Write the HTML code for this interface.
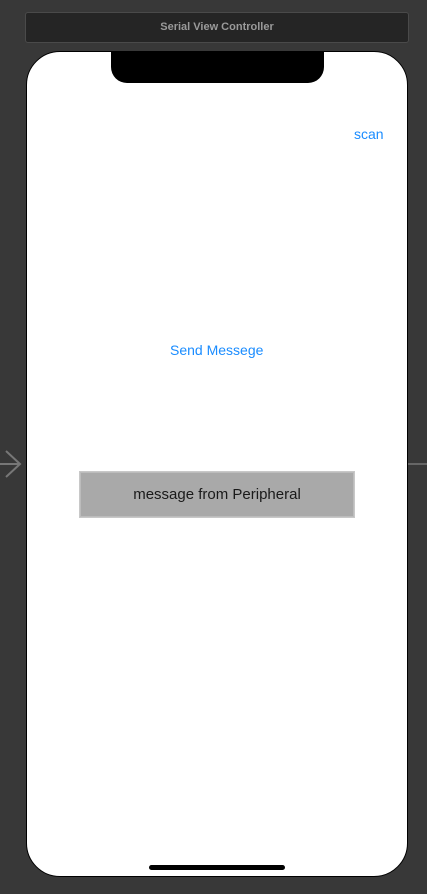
<!DOCTYPE html><html><head><style>
body{margin:0;width:427px;height:894px;background:#383838;position:relative;overflow:hidden;font-family:"Liberation Sans",sans-serif}
.hdr{position:absolute;left:25px;top:12px;width:382px;height:29px;background:#252525;border:1px solid #4a4a4a;border-radius:3px;color:#9a9a9a;font-size:11px;font-weight:bold;text-align:center;line-height:29px}
.ph{position:absolute;left:26px;top:51px;width:380px;height:824px;background:#fff;border:1px solid #000;border-radius:34px;overflow:hidden}
.notch{position:absolute;left:84px;top:-2px;width:213px;height:33px;background:#000;border-radius:0 0 16px 16px}
.home{position:absolute;left:122px;top:813px;width:136px;height:5px;background:#000;border-radius:3px}
.b{position:absolute;color:#1a8cff;font-size:14px}
.box{position:absolute;left:52px;top:419px;width:274px;height:45px;background:#a9a9a9;border:1px solid #c8c8c8;box-shadow:inset 0 0 0 1px #bcbcbc;text-align:center;line-height:46px;font-size:15px;color:#1a1a1a}
</style></head><body>
<div class="hdr">Serial View Controller</div>
<svg style="position:absolute;left:0;top:448px" width="26" height="32"><path d="M6 3 L20 16 L6 29 M0 16 H20" stroke="#777" stroke-width="2" fill="none"/></svg>
<div style="position:absolute;left:408px;top:463px;width:19px;height:2px;background:#666"></div>
<div class="ph"><div class="notch"></div>
<div class="b" style="left:327px;top:74px">scan</div>
<div class="b" style="left:143px;top:290px;font-size:14px">Send Messege</div>
<div class="box">message from Peripheral</div>
<div class="home"></div></div>
</body></html>
